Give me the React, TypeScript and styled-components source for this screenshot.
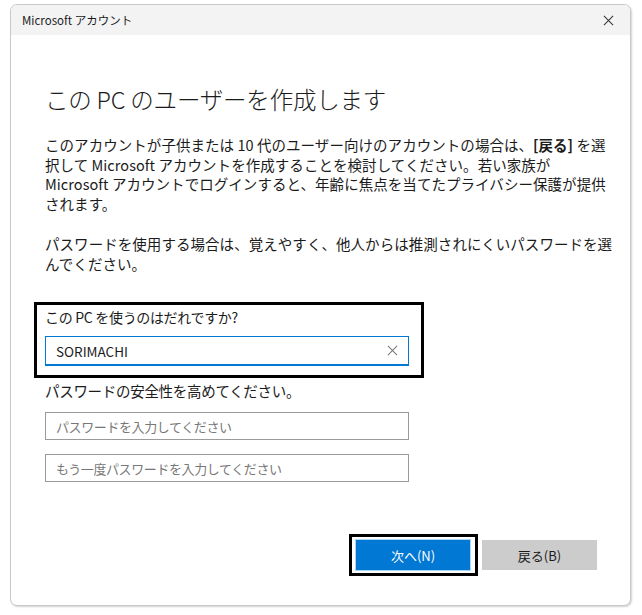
import styled, { createGlobalStyle } from "styled-components";

const GlobalStyle = createGlobalStyle`
  html, body {
    margin: 0;
    padding: 0;
    background: #ffffff;
  }
  body {
    font-family: "Noto Sans CJK JP", "Noto Sans", sans-serif;
    color: #1b1b1b;
  }
`;

const Page = styled.div`
  padding: 4px 11px 9px 10px;
  width: 642px;
  box-sizing: border-box;
`;

const Window = styled.div`
  height: 602px;
  box-sizing: border-box;
  border: 1px solid #c9c9c9;
  border-radius: 7px;
  box-shadow: 1px 1px 2px rgba(0, 0, 0, 0.18);
  background: #ffffff;
  display: flex;
  flex-direction: column;
  overflow: hidden;
`;

const TitleBar = styled.div`
  height: 30px;
  flex: none;
  background: #f3f3f3;
  display: flex;
  align-items: center;
  justify-content: space-between;
  padding: 0 12px 0 11px;
  font-size: 11.5px;
  color: #1b1b1b;
`;

const CloseBtn = styled.span`
  display: flex;
  align-items: center;
  justify-content: center;
  width: 20px;
  height: 20px;
`;

const Body = styled.div`
  flex: 1;
  display: flex;
  flex-direction: column;
  padding: 48px 33px 29px 34px;
`;

const Heading = styled.h1`
  margin: 0 0 20px;
  font-size: 23.5px;
  font-weight: 300;
  line-height: 32px;
  letter-spacing: -0.2px;
  color: #1b1b1b;
`;

const Para = styled.p`
  margin: 0 0 21px;
  font-size: 14.5px;
  line-height: 19.5px;
  letter-spacing: 0.05px;
  white-space: nowrap;
`;

const Strong = styled.b`
  font-weight: 700;
  letter-spacing: 0;
`;

const Highlight = styled.div<{ $pad: string }>`
  border: 3px solid #000000;
  padding: ${(p) => p.$pad};
  box-sizing: border-box;
`;

const NameBox = styled(Highlight)`
  width: 390px;
  margin: 8px 0 0 -11px;
`;

const Label = styled.div<{ $size: number }>`
  font-size: ${(p) => p.$size}px;
  line-height: 20px;
  letter-spacing: -0.3px;
`;

const InputWrap = styled.div<{ $active?: boolean }>`
  width: 364px;
  height: 30px;
  box-sizing: border-box;
  border: 1px solid ${(p) => (p.$active ? "#0078d4" : "#9a9a9a")};
  border-bottom-width: ${(p) => (p.$active ? "2px" : "1px")};
  display: flex;
  align-items: center;
  justify-content: space-between;
  padding: 0 10px 0 10px;
  font-size: ${(p) => (p.$active ? "13.5px" : "13px")};
  letter-spacing: ${(p) => (p.$active ? "0" : "-0.4px")};
  color: ${(p) => (p.$active ? "#1b1b1b" : "#777777")};
`;

const PasswordGroup = styled.div`
  display: flex;
  flex-direction: column;
  gap: 14px;
  margin-top: 11px;
`;

const PwInput = styled(InputWrap)`
  height: 28px;
`;

const Footer = styled.div`
  margin-top: auto;
  display: flex;
  justify-content: flex-end;
  align-items: center;
  gap: 4px;
`;

const ButtonFrame = styled(Highlight)`
  border-width: 3px;
`;

const Button = styled.button<{ $primary?: boolean }>`
  width: ${(p) => (p.$primary ? "114px" : "115px")};
  height: 30px;
  border: none;
  margin: 0;
  display: block;
  font-family: "Noto Sans CJK JP", "Noto Sans", sans-serif;
  font-size: 13px;
  background: ${(p) => (p.$primary ? "#0078d4" : "#cccccc")};
  color: ${(p) => (p.$primary ? "#ffffff" : "#1b1b1b")};
  box-shadow: ${(p) => (p.$primary ? "0 0 0 1px #a9d6f7" : "none")};
`;

const XIcon = ({ size, color }: { size: number; color: string }) => (
  <svg width={size} height={size} viewBox="0 0 12 12">
    <path d="M1 1L11 11M11 1L1 11" stroke={color} strokeWidth="1.1" fill="none" />
  </svg>
);

export default function App() {
  return (
    <>
      <GlobalStyle />
      <Page>
        <Window>
          <TitleBar>
            <span>Microsoft アカウント</span>
            <CloseBtn>
              <XIcon size={11} color="#333" />
            </CloseBtn>
          </TitleBar>
          <Body>
            <Heading>この PC のユーザーを作成します</Heading>
            <Para>
              このアカウントが子供または 10 代のユーザー向けのアカウントの場合は、<Strong>[戻る]</Strong> を選
              <br />
              択して Microsoft アカウントを作成することを検討してください。若い家族が
              <br />
              Microsoft アカウントでログインすると、年齢に焦点を当てたプライバシー保護が提供
              <br />
              されます。
            </Para>
            <Para>
              パスワードを使用する場合は、覚えやすく、他人からは推測されにくいパスワードを選
              <br />
              んでください。
            </Para>
            <NameBox $pad="2px 8px 9px">
              <Label $size={14}>この PC を使うのはだれですか?</Label>
              <InputWrap $active style={{ marginTop: 9 }}>
                <span>SORIMACHI</span>
                <XIcon size={11} color="#777" />
              </InputWrap>
            </NameBox>
            <Label $size={14.5} style={{ marginTop: 3 }}>
              パスワードの安全性を高めてください。
            </Label>
            <PasswordGroup>
              <PwInput>パスワードを入力してください</PwInput>
              <PwInput>もう一度パスワードを入力してください</PwInput>
            </PasswordGroup>
            <Footer>
              <ButtonFrame $pad="3px 5px 3px 4px">
                <Button $primary>次へ(N)</Button>
              </ButtonFrame>
              <Button>戻る(B)</Button>
            </Footer>
          </Body>
        </Window>
      </Page>
    </>
  );
}
